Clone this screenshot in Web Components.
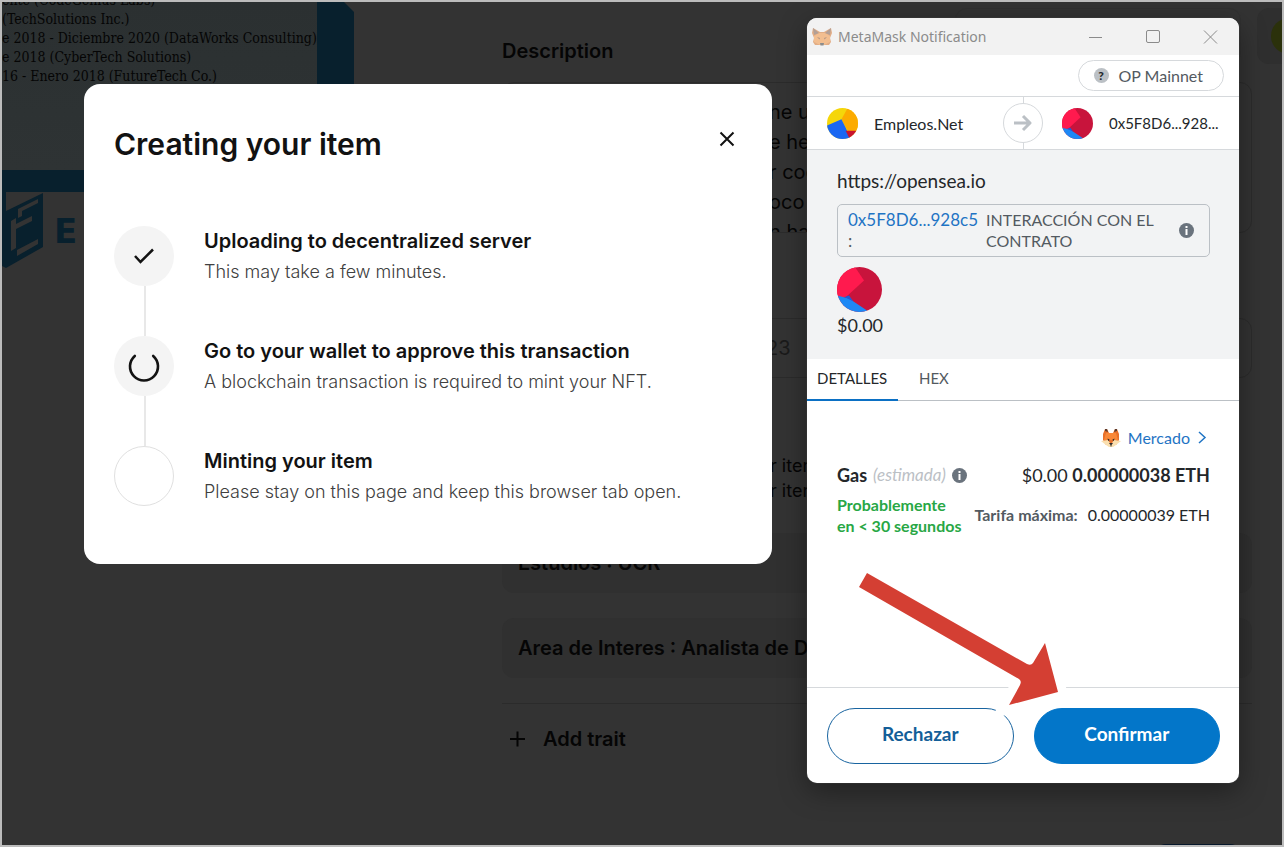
<!DOCTYPE html>
<html lang="en">
<head>
<meta charset="utf-8">
<title>Create item</title>
<style>
  body { margin: 0; background: #333; font-family: Inter, "Liberation Sans", sans-serif; }
</style>
</head>
<body>
<app-frame>
  <item-preview slot="preview"></item-preview>
  <item-form slot="form"></item-form>
  <progress-dialog slot="overlay" heading="Creating your item">
    <progress-step state="done"><span slot="title">Uploading to decentralized server</span>This may take a few minutes.</progress-step>
    <progress-step state="busy"><span slot="title">Go to your wallet to approve this transaction</span>A blockchain transaction is required to mint your NFT.</progress-step>
    <progress-step state="todo"><span slot="title">Minting your item</span>Please stay on this page and keep this browser tab open.</progress-step>
  </progress-dialog>
  <wallet-window slot="overlay"></wallet-window>
</app-frame>

<script>
const define = (name, html, setup) => {
  const template = document.createElement('template');
  template.innerHTML = html;
  customElements.define(name, class extends HTMLElement {
    constructor() {
      super();
      this.attachShadow({ mode: 'open' }).append(template.content.cloneNode(true));
    }
    connectedCallback() { if (setup) setup(this, this.shadowRoot); }
  });
};

define('app-frame', `
<style>
  :host { display: block; position: relative; box-sizing: border-box; min-height: 100vh; border: 2px solid #bcbcbc; background: #333; overflow: hidden; }
  .page { display: grid; grid-template-columns: 352px 1fr; column-gap: 148px; padding-right: 30px; }
  header { position: absolute; top: 6px; right: 0; display: flex; gap: 16px; }
  .search { width: 286px; height: 56px; border: 1px solid #303030; border-radius: 12px; box-sizing: border-box; }
  .account { width: 25px; height: 56px; background: #2f2f2f; border-radius: 12px 0 0 12px; overflow: hidden; display: flex; align-items: center; }
  .account i { flex: none; width: 36px; height: 36px; margin-left: 14px; border-radius: 50%; background: #2b310b; }
  .layer { position: absolute; inset: 0; display: flex; align-items: flex-start; gap: 35px; padding: 16px 43px 16px 82px; }
  ::slotted(progress-dialog) { flex: 1; margin-top: 66px; }
</style>
<div class="page"><slot name="preview"></slot><slot name="form"></slot></div>
<header><div class="search"></div><div class="account"><i></i></div></header>
<div class="layer"><slot name="overlay"></slot></div>`);

define('item-preview', `
<style>
  :host { display: block; overflow: hidden; }
  .sheet { display: flex; height: 168px; background: linear-gradient(#2b3031, #2e3334); }
  ul { flex: 1; margin: -11px 0 0; padding: 0; list-style: none; overflow: hidden; white-space: nowrap; font: 14px/19px "DejaVu Serif Condensed", "DejaVu Serif", serif; color: #050505; }
  .edge { width: 37px; background: #333; }
  .side { width: 37px; height: 100%; background: #08202d; clip-path: polygon(0 0, 27px 0, 100% 10px, 100% 100%, 0 100%); }
  .bar { height: 22px; background: #08202d; }
  .brand { display: flex; align-items: center; gap: 10px; color: #08202d; }
  .brand b { font: bold 34px/40px "DejaVu Sans", sans-serif; }
  svg { display: block; }
</style>
<div class="sheet">
  <ul>
    <li>ente (CodeGenius Labs)</li>
    <li>(TechSolutions Inc.)</li>
    <li>e 2018 - Diciembre 2020 (DataWorks Consulting)</li>
    <li>e 2018 (CyberTech Solutions)</li>
    <li>16 - Enero 2018 (FutureTech Co.)</li>
  </ul>
  <div class="edge"><div class="side"></div></div>
</div>
<div class="bar"></div>
<div class="brand">
  <svg width="42" height="78" viewBox="0 0 42 78" aria-hidden="true">
    <path fill="#08202d" d="M0 0H4V19L41 1V55L4 76L0 74Z"/>
    <path fill="#333" d="M16 17L36 7V11L20 19V24L16 26ZM9 29L14 26V32L30 24V29L14 37V56L9 59ZM15 58L36 47V52L15 64Z"/>
  </svg>
  <b>E</b>
</div>`);

define('item-form', `
<style>
  :host { display: block; padding-top: 34px; color: #050505; }
  form { display: flex; flex-direction: column; }
  label { font-weight: 600; font-size: 20px; line-height: 30px; }
  textarea, input { box-sizing: border-box; width: 100%; border: 1px solid #2b2b2b; border-radius: 12px; background: none; color: #050505; font: 20px/30px Inter, sans-serif; resize: none; outline: none; overflow: hidden; display: block; }
  textarea { height: 151px; margin-top: 16px; padding: 14px 16px 0 266px; }
  input { height: 60px; margin-top: 85px; padding: 0 16px 0 263px; color: #1a1a1a; }
  p { margin: 75px 0 30px; padding-left: 268px; font-size: 18px; line-height: 25px; white-space: pre; }
  .trait { height: 60px; margin-bottom: 25px; padding-left: 16px; border-radius: 12px; background: #303030; font-weight: 600; font-size: 20px; line-height: 60px; overflow: hidden; }
  .add { display: flex; align-items: center; gap: 18px; height: 70px; padding: 0 8px; border: 0; border-top: 1px solid #2b2b2b; background: none; color: #050505; font: 600 20px/30px Inter, sans-serif; }
  .save { align-self: flex-end; width: 88px; height: 40px; margin: 71px 10px -40px 0; border: 0; border-radius: 12px; background: #06172a; }
</style>
<form>
  <label for="description">Description</label>
  <textarea id="description" readonly>ne us
e her
r cod
oco e
n hac</textarea>
  <input aria-label="External link" value="23" readonly>
  <p>r item
r iter</p>
  <div class="trait">Estudios : UCR</div>
  <div class="trait">Area de Interes : Analista de D</div>
  <button class="add" type="button"><svg width="15" height="16" viewBox="0 0 15 16" aria-hidden="true"><path d="M0 8H15M7.500 0.500V15.500" stroke="#050505" stroke-width="2"/></svg>Add trait</button>
  <button class="save" type="button" aria-label="Create"></button>
</form>`);

define('progress-dialog', `
<style>
  :host { display: block; box-sizing: border-box; min-height: 480px; padding: 30px; border-radius: 16px; background: #fff; color: #121212; }
  header { display: flex; align-items: center; justify-content: space-between; height: 60px; margin-bottom: 52px; }
  h1 { margin: 0; font-size: 30px; line-height: 40px; font-weight: 600; }
  button { display: grid; place-items: center; width: 30px; height: 30px; margin-bottom: 10px; padding: 0; border: 0; background: none; }
  .steps { display: flex; flex-direction: column; gap: 48px; }
</style>
<header><h1></h1><button type="button" aria-label="Close"><svg width="16" height="16" viewBox="0 0 16 16"><path d="M1.500 1.500L14.500 14.500M14.500 1.500L1.500 14.500" stroke="#121212" stroke-width="2"/></svg></button></header>
<div class="steps"><slot></slot></div>`,
(host, root) => { root.querySelector('h1').textContent = host.getAttribute('heading'); });

const stepIcons = {
  done: '<svg width="22" height="18" viewBox="0 0 22 18"><path d="M2 9L7.500 15L20 2.500" fill="none" stroke="#121212" stroke-width="2.500"/></svg>',
  busy: '<svg width="32" height="32" viewBox="0 0 32 32"><path d="M6.800 5.900A14 14 0 1 0 25.200 5.900" fill="none" stroke="#121212" stroke-width="2.600" stroke-linecap="round"/></svg>',
  todo: ''
};
define('progress-step', `
<style>
  :host { display: grid; grid-template-columns: 60px 1fr; column-gap: 30px; position: relative; }
  .dot { display: grid; place-items: center; box-sizing: border-box; width: 60px; height: 60px; border-radius: 50%; background: #f4f4f4; }
  :host([state=todo]) .dot { background: #fff; border: 1px solid #e0e0e0; }
  :host(:not([state=todo]))::after { content: ""; position: absolute; top: 60px; left: 30px; width: 2px; height: 50px; background: #e8e8e8; }
  h2, p { margin: 0; }
  h2 { font-size: 20px; line-height: 30px; font-weight: 600; }
  p { font-size: 18px; line-height: 32px; font-weight: 300; color: #404040; }
</style>
<div class="dot"></div>
<div><h2><slot name="title"></slot></h2><p><slot></slot></p></div>`,
(host, root) => { root.querySelector('.dot').innerHTML = stepIcons[host.getAttribute('state')]; });

define('fox-icon', `
<style>:host { display: inline-block; width: 20px; height: 20px; } svg { display: block; width: 100%; height: 100%; } :host([faded]) { opacity: .6; } .raw { display: none; } :host([faded]) .raw { display: block; } :host([faded]) .face { display: none; }</style>
<svg class="face" viewBox="0 0 20 20" aria-hidden="true">
  <path fill="#e8702a" d="M4 1H6L8 5H12L14 1H16L18 6L18 12L15 17H5L2 12L2 6Z"/>
  <path fill="#5c3a2c" d="M4 1L6 1L7 4L4 3ZM14 1H16V3L13 4Z"/>
  <path fill="#f98838" d="M5 5H15L17 12H3Z"/>
  <path fill="#fadfaf" d="M0 13L7 12L9 15H11L13 12L20 13L15 17L12 19H8L5 17Z"/>
  <path fill="#332c2b" d="M6.500 10.500L8.500 11.500L8 13L7 12.500ZM13.500 10.500L11.500 11.500L12 13L13 12.500ZM8 15H12L10.500 17V18.500H9.500V17Z"/>
</svg>
<svg class="raw" viewBox="0 0 20 20" aria-hidden="true">
  <path fill="#d9803e" d="M1 1L8 5H12L19 1L20 6L18 11L19 15L17 18L12 18H8L3 18L1 15L2 11L0 6Z"/>
  <path fill="#f39c50" d="M2 9L7 6H13L18 9L18 15L12 18H8L2 15Z"/>
  <path fill="#8a6a5a" d="M1 1L7 6L2 8ZM19 1L13 6L18 8Z"/>
  <path fill="#8a5a3a" d="M5 10L8 11L7.500 12.500ZM15 10L12 11L12.500 12.500Z"/>
  <path fill="#4a4a4a" d="M8 16H12L11.500 18.500H8.500Z"/>
</svg>`);

define('info-icon', `
<style>:host { display: inline-block; width: 15px; height: 15px; } svg { display: block; }</style>
<svg width="15" height="15" viewBox="0 0 15 15" role="img" aria-label="Info"><circle cx="7.500" cy="7.500" r="7.500" fill="#6a737d"/><path fill="#fff" d="M6.500 3H8.500V5H6.500ZM6.500 6H8.500V12H6.500Z"/></svg>`);

const jazz = {
  yellow: '<rect width="30" height="30" fill="#f5d60a"/><path fill="#fcab00" d="M20 0H30V24L20 22L14 11Z"/><path fill="#1a67f2" d="M0 17L14 11L22 27V30H0Z"/><path fill="#c8142f" d="M18 22H30V30H22Z"/>',
  red: '<rect width="30" height="30" fill="#c8143c"/><path fill="#ff1a4e" d="M0 0H12L18 9L6 20H0Z"/><path fill="#1e88f5" d="M0 19L8 21L20 29V30H0Z"/><path fill="#2459d8" d="M5 20L8 19L11 23Z"/>'
};
define('account-avatar', `
<style>:host { display: block; flex: none; width: 31px; height: 31px; border-radius: 50%; overflow: hidden; } svg { display: block; width: 100%; height: 100%; }</style>
<svg viewBox="0 0 30 30" aria-hidden="true"></svg>`,
(host, root) => { root.querySelector('svg').innerHTML = jazz[host.getAttribute('tone')]; });

define('wallet-window', `
<style>
  :host { display: flex; flex-direction: column; position: relative; flex: none; width: 432px; min-height: 765px; border-radius: 10px; background: #fff; color: #24272a; font: 16px/21px Lato, "Liberation Sans", sans-serif; box-shadow: 0 0 1px #777, 0 8px 28px rgba(0,0,0,.38); }
  * { box-sizing: border-box; }
  .title { display: flex; align-items: center; gap: 6px; height: 37px; padding: 0 21px 0 5px; border-radius: 10px 10px 0 0; background: #f2f2f2; color: #8b8b8b; font: 14px/20px "Noto Sans", sans-serif; }
  .title span { flex: 1; }
  .title button { width: 16px; height: 16px; margin-left: 35px; padding: 0; border: 0; background: none; }
  .title svg { display: block; }
  .network { display: flex; justify-content: flex-end; align-items: center; height: 42px; padding: 0 15px; border-bottom: 1px solid #d6d9dc; }
  .network button { display: flex; align-items: center; gap: 10px; height: 31px; padding: 0 20px 0 15px; border: 1px solid #d6d9dc; border-radius: 16px; background: #fff; color: #535a61; font: 16px/21px Lato, sans-serif; }
  .network i { display: grid; place-items: center; width: 15px; height: 15px; border-radius: 50%; background: #bbc0c5; color: #24272a; font: 900 12px/15px Lato, sans-serif; }
  .accounts { display: grid; grid-template-columns: 1fr 40px 1fr; height: 53px; border-bottom: 1px solid #d6d9dc; }
  .account { display: flex; align-items: center; gap: 16px; padding-left: 20px; font-size: 16px; white-space: nowrap; }
  .address { padding-left: 19px; font-size: 15px; }
  .mid { display: grid; place-items: center; background: linear-gradient(#d6d9dc, #d6d9dc) center / 1px 100% no-repeat; }
  .mid i { display: grid; place-items: center; width: 40px; height: 40px; border: 1px solid #d6d9dc; border-radius: 50%; background: #fff; }
  .summary { height: 209px; padding: 19px 29px 0 30px; background: #f2f3f4; font-size: 18px; line-height: 24px; }
  .url { font-size: 19px; }
  .contract { display: flex; gap: 10px; align-items: center; height: 53px; margin: 11px 0 10px; padding: 0 15px 0 10px; border: 1px solid #bbc0c5; border-radius: 5px; font-size: 17px; line-height: 21px; color: #535a61; }
  .contract a { color: #1f74c4; text-decoration: none; }
  .contract div { width: 128px; padding-bottom: 2px; }
  .contract span { flex: 1; font-size: 16px; padding: 0 10px 2px 0; }
  .summary account-avatar { width: 45px; height: 45px; margin-bottom: 1px; }
  .tabs { display: flex; height: 42px; border-bottom: 1px solid #bbc0c5; }
  .tabs button { height: 42px; padding: 0 10px 1px; border: 0; border-bottom: 2px solid transparent; background: none; color: #535a61; font: 15px/21px Lato, sans-serif; text-align: left; }
  .tabs button.on { border-color: #0b70c4; color: #24272a; width: 91px; margin-right: 11px; }
  .details { flex: 1; padding: 26px 29px 0 30px; }
  .market { display: flex; justify-content: flex-end; align-items: center; gap: 7px; padding-right: 3px; color: #1f74c4; text-decoration: none; margin-bottom: 15px; }
  .row { display: flex; justify-content: space-between; align-items: center; white-space: nowrap; }
  .gas { font-size: 18px; line-height: 24px; margin-bottom: 7px; }
  .gas div { display: flex; align-items: center; gap: 6px; }
  .gas em { font-size: 17px; color: #bbc0c5; }
  .time { color: #28a745; font-weight: 700; }
  .fee { padding-bottom: 2px; }
  .fee b { color: #535a61; margin-right: 10px; }
  footer { display: grid; grid-template-columns: 1fr 1fr; gap: 20px; height: 96px; padding: 20px 19px 19px 20px; border-top: 1px solid #d6d9dc; }
  footer button { border: 1px solid #1864a0; border-radius: 28px; height: 56px; padding: 0 0 4px; background: #fff; color: #135e98; font: 700 19px/24px Lato, sans-serif; }
  footer .go { border-color: #0376c9; background: #0376c9; color: #fff; }
  .pointer { position: absolute; left: 42px; bottom: 58px; pointer-events: none; }
</style>
<div class="title"><fox-icon faded></fox-icon><span>MetaMask Notification</span>
  <button type="button" aria-label="Minimize"><svg width="16" height="16"><path d="M1 8.500H14" stroke="#8b8b8b"/></svg></button>
  <button type="button" aria-label="Maximize"><svg width="16" height="16"><rect x="1.500" y="1.500" width="13" height="12" rx="1.500" fill="none" stroke="#8b8b8b"/></svg></button>
  <button type="button" aria-label="Close"><svg width="16" height="16"><path d="M2 1.500L15 14.500M15 1.500L2 14.500" stroke="#8b8b8b"/></svg></button>
</div>
<div class="network"><button type="button"><i>?</i>OP Mainnet</button></div>
<div class="accounts">
  <div class="account"><account-avatar tone="yellow"></account-avatar>Empleos.Net</div>
  <div class="mid"><i><svg width="20" height="18" viewBox="0 0 20 18" aria-hidden="true"><path d="M1 9H17M10 2L17 9L10 16" fill="none" stroke="#bbc0c5" stroke-width="3" stroke-linejoin="round"/></svg></i></div>
  <div class="account address"><account-avatar tone="red"></account-avatar>0x5F8D6...928...</div>
</div>
<div class="summary">
  <div class="url">https://opensea.io</div>
  <div class="contract"><div><a href="#contract">0x5F8D6...928c5</a><br>:</div><span>INTERACCIÓN CON EL CONTRATO</span><info-icon></info-icon></div>
  <account-avatar tone="red"></account-avatar>
  <div>$0.00</div>
</div>
<div class="tabs" role="tablist"><button class="on" type="button" role="tab" aria-selected="true">DETALLES</button><button type="button" role="tab">HEX</button></div>
<div class="details">
  <a class="market" href="#market"><fox-icon></fox-icon>Mercado<svg width="10" height="13" viewBox="0 0 10 13" aria-hidden="true"><path d="M2 1L8 6.500L2 12" fill="none" stroke="#1f74c4" stroke-width="1.500"/></svg></a>
  <div class="row gas"><div><b>Gas</b><em>(estimada)</em><info-icon></info-icon></div><span>$0.00 <b>0.00000038 ETH</b></span></div>
  <div class="row"><span class="time">Probablemente<br>en &lt; 30 segundos</span><span class="fee"><b>Tarifa máxima:</b>0.00000039 ETH</span></div>
</div>
<footer><button type="button">Rechazar</button><button class="go" type="button">Confirmar</button></footer>
<svg class="pointer" width="226" height="168" viewBox="849 557 226 168" aria-hidden="true"><path d="M867 573L859 587L1019 679Q1022 681 1020 685L1009 705L1058 692L1045 643L1033 663Q1031 666 1027 664Z" fill="none" stroke="#fff" stroke-width="18" stroke-linejoin="miter"/><path d="M867 573L859 587L1019 679Q1022 681 1020 685L1009 705L1058 692L1045 643L1033 663Q1031 666 1027 664Z" fill="#d43f33"/></svg>`);
</script>
</body>
</html>
